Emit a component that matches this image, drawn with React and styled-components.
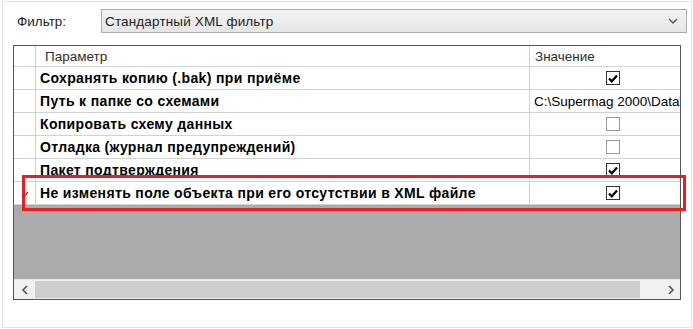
import React from 'react';
import styled, { createGlobalStyle } from 'styled-components';

const Global = createGlobalStyle`
  html, body { margin: 0; padding: 0; background: #fff; }
  body { font-family: "Liberation Sans", Arial, sans-serif; }
`;

const rows = [
  { name: 'Сохранять копию (.bak) при приёме', value: true },
  { name: 'Путь к папке со схемами', value: 'C:\\Supermag 2000\\Data\\' },
  { name: 'Копировать схему данных', value: false },
  { name: 'Отладка (журнал предупреждений)', value: false },
  { name: 'Пакет подтверждения', value: true },
  { name: 'Не изменять поле объекта при его отсутствии в XML файле', value: true, current: true },
];

const Page = styled.div`
  width: 693px;
  height: 329px;
  padding: 1px 0 0 2px;
  box-sizing: border-box;
  overflow: hidden;
`;

const Panel = styled.div`
  position: relative;
  width: 690px;
  height: 327px;
  box-sizing: border-box;
  border: 1px solid #e3e3e3;
  padding: 7px 0 0 10px;
  display: flex;
  flex-direction: column;
`;

const FilterRow = styled.div`
  display: flex;
  align-items: center;
  height: 24px;
  margin-bottom: 12px;
`;

const Label = styled.span`
  width: 84px;
  padding-left: 4px;
  font-size: 13.5px;
  color: #1e1e1e;
`;

const Combo = styled.div`
  width: 586px;
  height: 24px;
  box-sizing: border-box;
  border: 1px solid #adadad;
  background: linear-gradient(#f2f2f2, #e6e6e6);
  display: flex;
  align-items: center;
  justify-content: space-between;
  padding: 0 8px 0 3px;
  font-size: 13.5px;
  letter-spacing: 0.15px;
  color: #1e1e1e;
`;

const Grid = styled.div`
  width: 668px;
  height: 255px;
  box-sizing: border-box;
  border: 1px solid #555;
  display: flex;
  flex-direction: column;
  background: #ababab;
`;

const Row = styled.div`
  display: flex;
  height: ${(p) => (p.$header ? 21 : 23)}px;
  box-sizing: border-box;
  border-bottom: 1px solid #d2d2d2;
  background: #fff;
`;

const RowHead = styled.div`
  width: 22px;
  box-sizing: border-box;
  border-right: 1px solid #d2d2d2;
  display: flex;
  align-items: center;
  justify-content: center;
  padding-top: 3px;
`;

const Cell = styled.div`
  box-sizing: border-box;
  display: flex;
  align-items: center;
  overflow: hidden;
  white-space: nowrap;
  font-size: ${(p) => (p.$bold ? 14 : 13.5)}px;
  font-weight: ${(p) => (p.$bold ? 700 : 400)};
  letter-spacing: ${(p) => (p.$bold ? '0.35px' : '0')};
  color: ${(p) => (p.$header ? '#2e2e2e' : '#000')};
  justify-content: ${(p) => (p.$center ? 'center' : 'flex-start')};
  padding-left: ${(p) => (p.$center ? 0 : p.$pad)}px;
`;

const ParamCell = styled(Cell)`
  width: 494px;
  border-right: 1px solid #d2d2d2;
`;

const ValueCell = styled(Cell)`
  flex: 1;
`;

const Box = styled.div`
  width: 14px;
  height: 14px;
  box-sizing: border-box;
  border: 1px solid ${(p) => (p.$on ? '#333' : '#9a9a9a')};
  background: #fff;
  display: flex;
  align-items: center;
  justify-content: center;
  margin-left: 16px;
`;

const Empty = styled.div`
  flex: 1;
`;

const Scrollbar = styled.div`
  height: 19px;
  display: flex;
  background: #f0f0f0;
  border-top: 1px solid #e6e6e6;
`;

const ArrowBtn = styled.div`
  width: ${(p) => p.$w}px;
  display: flex;
  align-items: center;
  justify-content: ${(p) => (p.$right ? 'flex-end' : 'center')};
  padding-right: ${(p) => (p.$right ? 5 : 0)}px;
  box-sizing: border-box;
`;

const Thumb = styled.div`
  width: 605px;
  margin: 1px 0;
  background: #cdcdcd;
`;

const Highlight = styled.div`
  position: absolute;
  left: 19px;
  top: 173px;
  width: 664px;
  height: 36px;
  box-sizing: border-box;
  border: 3px solid #ea1c24;
  pointer-events: none;
`;

const Check = () => (
  <svg width="10" height="9" viewBox="0 0 10 9">
    <path d="M1 4.5 L3.8 7.3 L9 1.5" fill="none" stroke="#000" strokeWidth="2.2" />
  </svg>
);

const Chevron = ({ dir }) => (
  <svg width="8" height="10" viewBox="0 0 8 10">
    <path d={dir === 'left' ? 'M6 1 L2 5 L6 9' : 'M2 1 L6 5 L2 9'} fill="none" stroke="#555" strokeWidth="1.6" />
  </svg>
);

const App = () => (
  <Page>
    <Global />
    <Panel>
      <FilterRow>
        <Label>Фильтр:</Label>
        <Combo>
          <span>Стандартный XML фильтр</span>
          <svg width="10" height="6" viewBox="0 0 10 6">
            <path d="M1 1 L5 5 L9 1" fill="none" stroke="#555" strokeWidth="1.3" />
          </svg>
        </Combo>
      </FilterRow>
      <Grid>
        <Row $header>
          <RowHead />
          <ParamCell $header $pad={9}>Параметр</ParamCell>
          <ValueCell $header $pad={5}>Значение</ValueCell>
        </Row>
        {rows.map((r) => (
          <Row key={r.name}>
            <RowHead>
              {r.current && (
                <svg width="8" height="7" viewBox="0 0 8 7">
                  <path d="M1 4 L2.8 6 L7 1" fill="none" stroke="#555" strokeWidth="1.3" />
                </svg>
              )}
            </RowHead>
            <ParamCell $bold $pad={4}>{r.name}</ParamCell>
            {typeof r.value === 'string' ? (
              <ValueCell $pad={4}>{r.value}</ValueCell>
            ) : (
              <ValueCell $center>
                <Box $on={r.value}>{r.value && <Check />}</Box>
              </ValueCell>
            )}
          </Row>
        ))}
        <Empty />
        <Scrollbar>
          <ArrowBtn $w={21}><Chevron dir="left" /></ArrowBtn>
          <Thumb />
          <ArrowBtn $w={40} $right><Chevron dir="right" /></ArrowBtn>
        </Scrollbar>
      </Grid>
      <Highlight />
    </Panel>
  </Page>
);

export default App;
